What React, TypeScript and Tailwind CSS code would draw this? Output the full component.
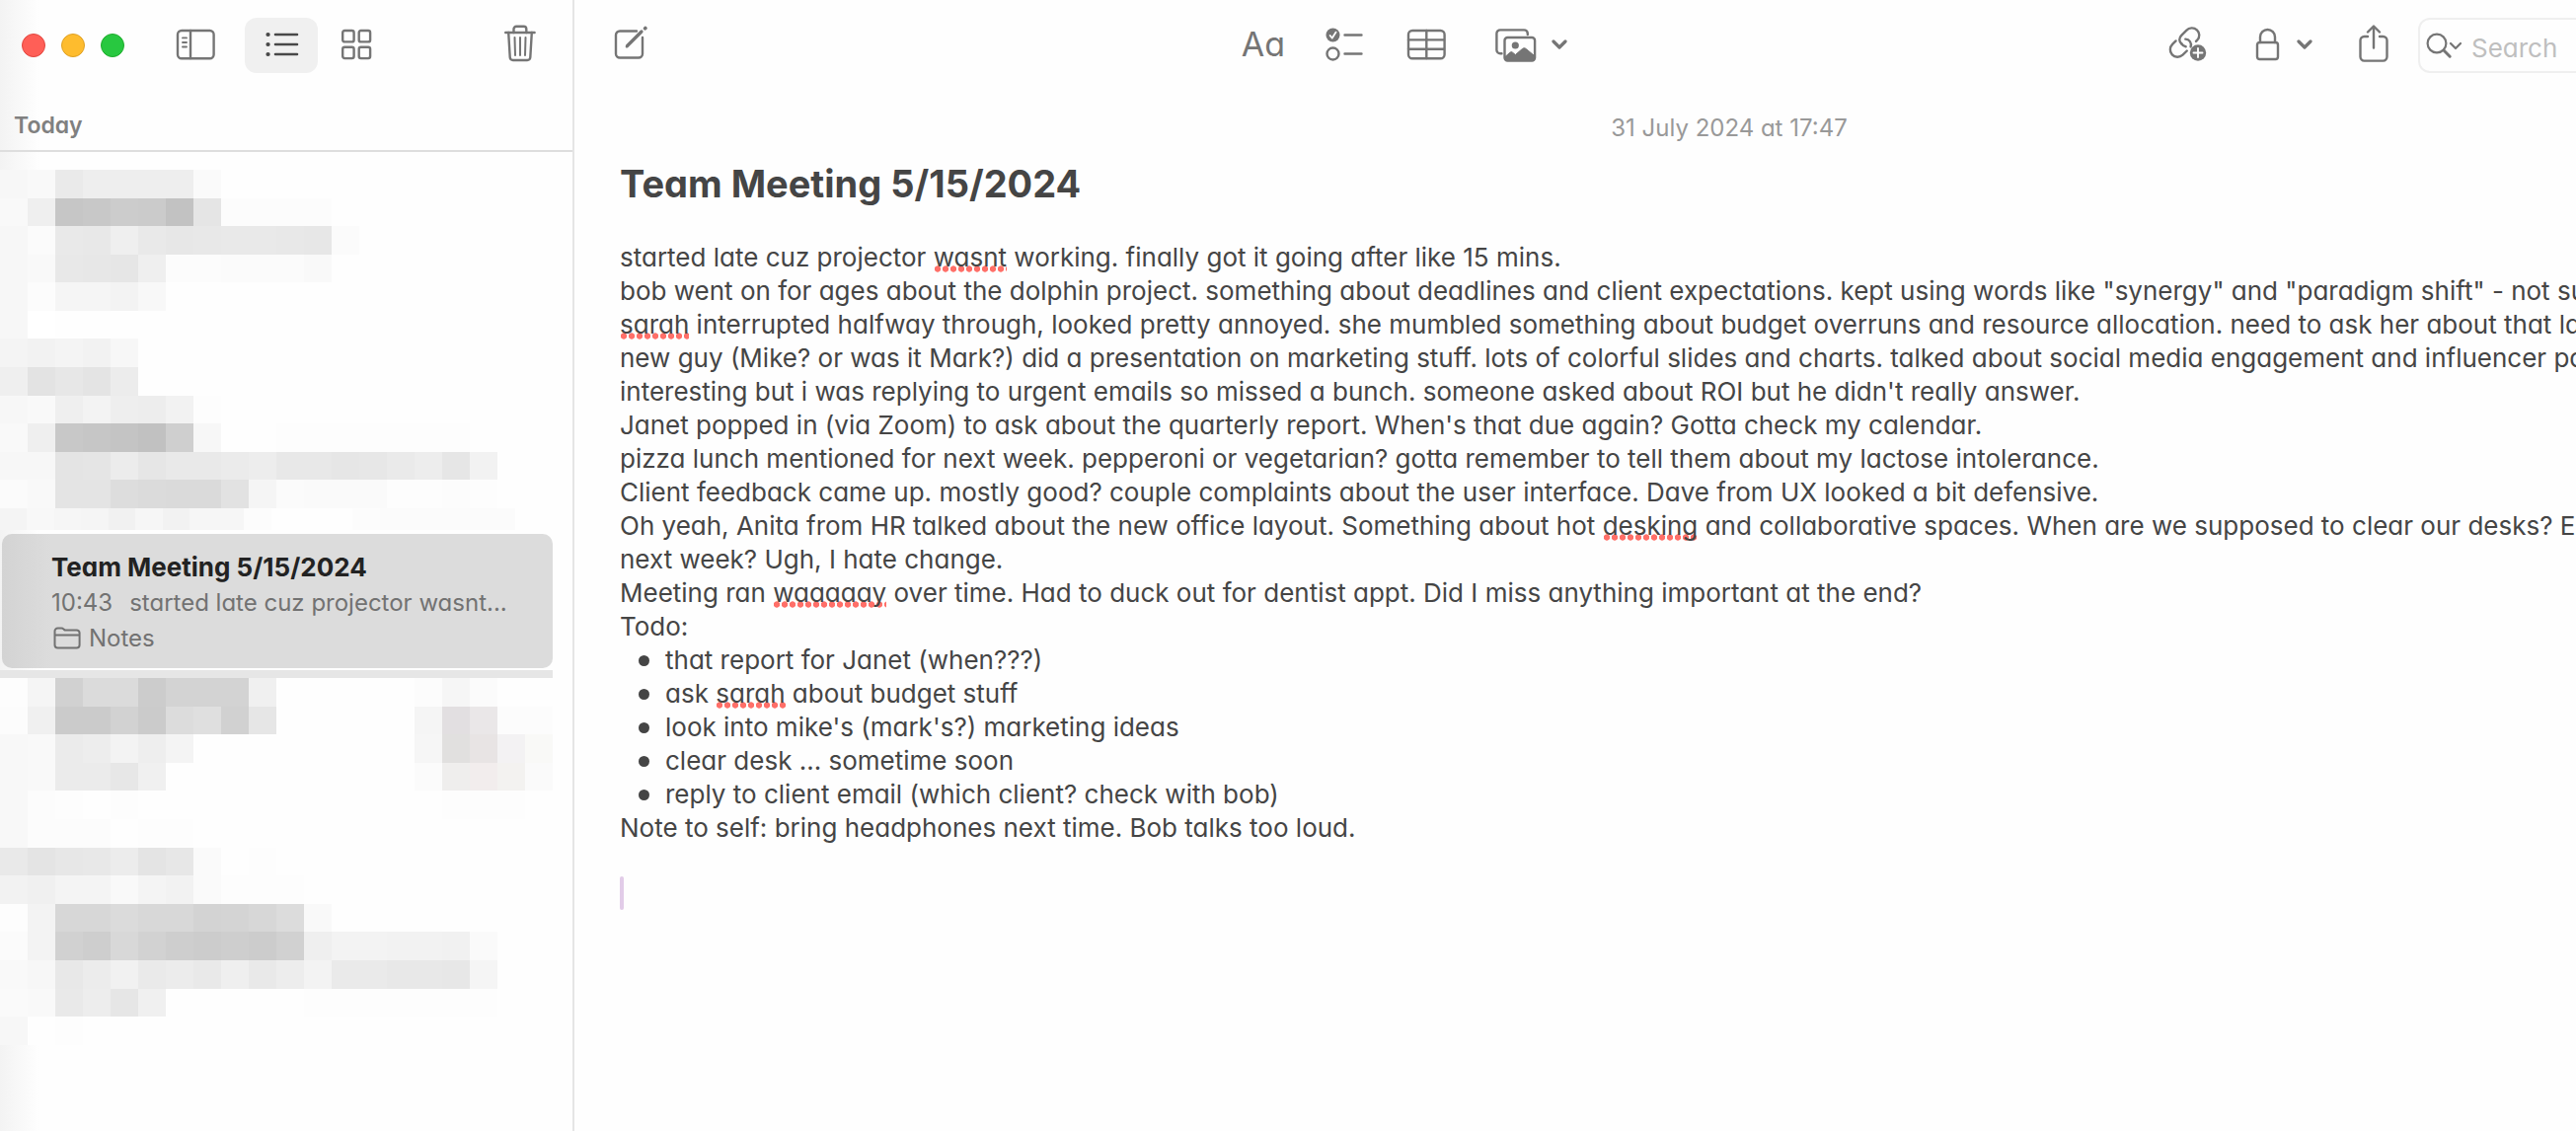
import React from "react";

type IconProps = { className: string; viewBox: string; children: React.ReactNode };

function Icon({ className, viewBox, children }: IconProps) {
  return (
    <svg
      className={className}
      viewBox={viewBox}
      fill="none"
      stroke="currentColor"
      strokeWidth="2.4"
      strokeLinecap="round"
      strokeLinejoin="round"
      aria-hidden="true"
    >
      {children}
    </svg>
  );
}

function Chevron({ className }: { className: string }) {
  return (
    <Icon className={className} viewBox="0 0 16 12">
      <path d="M2 3l6 6 6-6" strokeWidth="3.2" />
    </Icon>
  );
}

const topMosaic = [
  "f7 f9 ea ee ee ee ee fa",
  "f9 ef c6 c8 cc cb c2 e5 fc fc fc fc",
  "f7 fb e9 e8 ef e9 e7 e8 e9 e9 e8 e7 fb",
  "f7 f9 e8 e7 e6 ef fc fc fb fb fb f9",
  "f7 fc f5 f5 f3 f8",
  "f7 ff fe fe fe",
  "f4 f2 f4 f2 f7",
  "ef e3 e7 e4 ec fe",
  "f7 f9 ef f3 ee ed f2 fd",
  "f9 ef c8 c6 c4 c1 cf f7 fe fe fd fd fd fd fd fd fd",
  "f7 f7 e4 e5 ec e6 e9 e9 eb ed e8 e8 e6 e7 ea ed e6 f2",
  "fb f9 e4 e4 dd db da da e2 f5 fb fa fa fa fd fd fc fd",
];

const topMosaicTail = "f4 f8 f6 f5 f1 f6 f2 f6 f6 fc fe fe fe fc fb fb fb fb fb";

const bottomMosaic = [
  "fd f5 d1 db db cc d3 d3 d3 f0 fe fe fe fe fe fc f6 fb fe",
  "fc f0 cb cb d2 cb dc df d1 e6 fe fe fe fe fe f5 e2dfe1 eae7e8 fc fc",
  "f8 f9 eb ed f3 ee f4 fe fe fe fe fe fe fe fe f6 e1e0df e8e4e4 f3f2f3 f9f9f7",
  "f8 f9 eb eb e7 f0 fe fe fe fe fe fe fe fe fe fb efeeed f2eded f3f2f0 fa",
  "f8 fc fd fe fd fe fe fe fe fe fe fe fe fe fe fe fd fd fd",
  "f8 fc fc fc fe fd fd",
  "e9 e4 e7 e8 ec e4 e7 fa fe fd",
  "f2 f0 f4 f4 f9 f4 f2 fa fd fd fd",
  "fd f3 d7 d7 db d8 d8 d3 d4 d7 dc f9",
  "fb f3 d1 ce d8 d2 ce cc ce cc d1 ef f3 f3 f2 f2 f1 fa",
  "f9 f7 e8 ec f1 ea ec e9 ef e9 ed f3 ea ea e8 e8 e7 f5",
  "fa f9 e9 ed e6 f0 fe fe fe fe fe fd fd fd fd fd fd fd",
  "f7 fe fd fe fe fe",
];

function MosaicRow({ row, className }: { row: string; className: string }) {
  return (
    <div className={className}>
      {row.split(" ").map((tone, i) => (
        <span
          key={i}
          className="w-7"
          style={{ backgroundColor: "#" + (tone.length === 2 ? tone + tone + tone : tone) }}
        />
      ))}
    </div>
  );
}

function Misspelled({ children }: { children: string }) {
  return (
    <span className="bg-[radial-gradient(circle_closest-side,#ff6f68_80%,transparent_100%)] bg-[length:8px_7px] bg-[position:0_100%] bg-repeat-x">
      {children}
    </span>
  );
}

const todos: React.ReactNode[] = [
  "that report for Janet (when???)",
  <>
    ask <Misspelled>sarah</Misspelled> about budget stuff
  </>,
  "look into mike's (mark's?) marketing ideas",
  "clear desk ... sometime soon",
  "reply to client email (which client? check with bob)",
];

function Sidebar() {
  return (
    <aside className="w-[582px] shrink-0 border-r-2 border-[#e5e5e5] bg-[linear-gradient(to_right,#f3f3f3,#fefefe_40px)]">
      <div className="flex h-[92px] items-center pl-[22px] pr-[37px] text-[#757575]">
        <div className="flex gap-4">
          <button aria-label="Close" className="size-6 rounded-full border border-[#e2463f] bg-[#ff5f57]" />
          <button aria-label="Minimise" className="size-6 rounded-full border border-[#dfa023] bg-[#febc2e]" />
          <button aria-label="Zoom" className="size-6 rounded-full border border-[#1eac2c] bg-[#28c840]" />
        </div>
        <button aria-label="Toggle folders" className="mb-0.5 ml-[52px]">
          <Icon className="h-8 w-10" viewBox="0 0 40 32">
            <rect x="2" y="2" width="36.6" height="28.2" rx="4" />
            <path d="M15 2v28" />
            <path d="M7 9.4h4M7 14h4M7 18.5h4" strokeWidth="1.9" />
          </Icon>
        </button>
        <button
          aria-label="View as list"
          aria-pressed="true"
          className="ml-[30px] flex h-14 w-[74px] items-center justify-center rounded-xl bg-[#f0f0f0] text-[#484848]"
        >
          <Icon className="mb-0.5 h-7 w-9" viewBox="0 0 36 28">
            <path d="M12 4h22M12 14h22M12 24h22" strokeWidth="2.6" />
            <path d="M4.5 4h.1M4.5 14h.1M4.5 24h.1" strokeWidth="4.2" />
          </Icon>
        </button>
        <button aria-label="View as gallery" className="mb-0.5 ml-6">
          <Icon className="size-8" viewBox="0 0 32 32">
            <rect x="1.2" y="2" width="11.4" height="11.4" rx="2" />
            <rect x="17.7" y="2" width="11.4" height="11.4" rx="2" />
            <rect x="1.2" y="18.7" width="11.4" height="11.4" rx="2" />
            <rect x="17.7" y="18.7" width="11.4" height="11.4" rx="2" />
          </Icon>
        </button>
        <button aria-label="Delete" className="mb-1 ml-auto">
          <Icon className="h-[38px] w-8" viewBox="0 0 32 38">
            <path d="M1.2 8h29.4" />
            <path d="M9.5 8V4.4a2.6 2.6 0 0 1 2.6-2.6h7.600a2.6 2.6 0 0 1 2.6 2.6V8" />
            <path d="M4.2 8l1.5 25a3.2 3.2 0 0 0 3.2 3h14.2a3.2 3.2 0 0 0 3.2-3L27.8 8" />
            <path d="M10.5 13l.5 18M16 13v18M21.500 13l-.5 18" strokeWidth="2" />
          </Icon>
        </button>
      </div>
      <h2 className="h-[62px] border-b-2 border-[#dedede] pl-3.5 pt-5 text-[23px] font-semibold leading-[30px] text-[#808080]">
        Today
      </h2>

      <div aria-hidden="true" className="mt-[18px] flex flex-col">
        <div className="flex h-[343px] flex-col">
          {topMosaic.map((row, i) => (
            <MosaicRow key={i} row={row} className="flex flex-1" />
          ))}
        </div>
        <MosaicRow row={topMosaicTail} className="flex h-[22px] w-[522px] overflow-hidden" />
      </div>

      <a
        href="#team-meeting"
        className="ml-0.5 mr-5 mt-1 block h-[136px] rounded-[10px] bg-[linear-gradient(to_right,#d3d3d3,#dcdcdc_50px)] pl-[50px] pt-4 text-[24px] leading-9 text-[#727272]"
      >
        <h3 className="text-[26px] font-bold text-[#222]">Team Meeting 5/15/2024</h3>
        <p className="flex gap-[17px] whitespace-nowrap">
          <span>10:43</span>
          <span>started late cuz projector wasnt...</span>
        </p>
        <p className="flex items-center gap-2">
          <Icon className="ml-0.5 h-6 w-7" viewBox="0 0 28 24">
            <path
              d="M1.5 18.5v-14a3 3 0 0 1 3-3h3.8c1 0 1.6.4 2.3 1.1l1 .8h12a3 3 0 0 1 3 3v12.100a3 3 0 0 1-3 3h-19.100a3 3 0 0 1-3-3zM2 8.500h24"
              strokeWidth="2"
            />
          </Icon>
          Notes
        </p>
      </a>

      <div aria-hidden="true" className="mr-5 mt-0.5 h-2 bg-[#e6e6e6]" />
      <div aria-hidden="true" className="flex h-[372px] flex-col">
        {bottomMosaic.map((row, i) => (
          <MosaicRow key={i} row={row} className="flex flex-1" />
        ))}
      </div>
    </aside>
  );
}

function Toolbar() {
  return (
    <header className="flex h-[90px] items-center justify-between pl-10 pr-5 text-[#757575]">
      <button aria-label="New note">
        <Icon className="mb-0.5 h-9 w-[35px]" viewBox="0 0 35 36">
          <path d="M23 5.500H6a4 4 0 0 0-4 4v19a4 4 0 0 0 4 4h19a4 4 0 0 0 4-4V12" />
          <path d="M13.500 20.500L28 6" strokeWidth="3.2" />
          <path d="M12.800 21.300l.6-.9" strokeWidth="2.2" />
          <path d="M31.600 2.800l.3-.3" strokeWidth="3.6" />
        </Icon>
      </button>

      <div className="mr-2 flex items-center">
        <button aria-label="Text format" className="text-[34px] leading-10">
          Aa
        </button>
        <button aria-label="Checklist" className="ml-[41px]">
          <Icon className="h-[34px] w-[38px]" viewBox="0 0 38 34">
            <circle cx="7.5" cy="7.5" r="7" fill="currentColor" stroke="none" />
            <path d="M4.6 8l2.2 2.6 3.8-6" stroke="#fefefe" strokeWidth="1.8" />
            <circle cx="7.5" cy="26.5" r="6" />
            <path d="M19.5 7.5h17M19.5 26.5h17" />
          </Icon>
        </button>
        <button aria-label="Table" className="ml-11">
          <Icon className="h-8 w-10" viewBox="0 0 40 32">
            <rect x="2" y="2" width="36.6" height="28.2" rx="4" />
            <path d="M20.3 2v28M2 11.4h36M2 20.8h36" />
          </Icon>
        </button>
        <button aria-label="Media" className="ml-[50px] flex items-center gap-[15px]">
          <Icon className="mt-0.5 h-[34px] w-[42px]" viewBox="0 0 42 34">
            <path d="M6.5 25.3H5a3.6 3.6 0 0 1-3.6-3.6V5A3.6 3.6 0 0 1 5 1.4h24.2A3.6 3.6 0 0 1 32.8 5v1" />
            <rect x="9.5" y="9" width="30.6" height="23.6" rx="3" />
            <circle cx="20.3" cy="17" r="3.6" fill="currentColor" stroke="none" />
            <path
              d="M10 28.5l5-4.3c.9-.8 1.8-.8 2.6 0l2.8 2.3 7-6c1.3-1.1 2.5-1.1 3.8 0l8.800 7.300v2.700a2 2 0 0 1-2 2H12a2 2 0 0 1-2-2z"
              fill="currentColor"
              strokeWidth="1"
            />
          </Icon>
          <Chevron className="h-3 w-4" />
        </button>
      </div>

      <div className="flex items-center">
        <button aria-label="Add link">
          <Icon className="h-9 w-10" viewBox="0 0 40 36">
            <path d="M13.5 17.5c-3-2.6-2.9-6.1-.3-8.7l5-5c3-3 7.7-3.2 10.7-.5s3.2 7.3.3 10.4l-1.2 1.2" />
            <path d="M17.3 12.6c4 .2 6.6 4 5.3 7.8" />
            <path d="M7.6 14.4l-3.3 3.3c-3 3-3.3 7.7-.5 10.7s7.7 3 10.7.3l4.3-4.2" />
            <path d="M13.4 17.4c1 1.7 2.4 2.6 4.3 2.9" />
            <circle cx="30" cy="26.5" r="8.2" fill="currentColor" stroke="none" />
            <path d="M30 22v9M25.5 26.5h9" stroke="#fefefe" strokeWidth="1.9" />
          </Icon>
        </button>
        <button aria-label="Lock note" className="ml-12 flex items-center gap-4">
          <Icon className="h-[34px] w-[26px]" viewBox="0 0 26 34">
            <rect x="2" y="15" width="21" height="17" rx="2.4" />
            <path d="M5 15V9.500a7.500 7.500 0 0 1 15 0V15" />
          </Icon>
          <Chevron className="h-3 w-4" />
        </button>
        <button aria-label="Share" className="mb-0.5 ml-[47px]">
          <Icon className="h-[38px] w-[30px]" viewBox="0 0 30 38">
            <path d="M9 12H5.500a4 4 0 0 0-4 4v16.600a4 4 0 0 0 4 4H24.500a4 4 0 0 0 4-4V16a4 4 0 0 0-4-4H21" />
            <path d="M15 23.500V2M9 7.500l6-6 6 6" />
          </Icon>
        </button>
        <label className="ml-[30px] mt-0.5 flex h-14 w-[452px] items-center rounded-xl border-2 border-[#efefef] pl-1.5">
          <Icon className="h-7 w-9" viewBox="0 0 36 28">
            <circle cx="11" cy="12" r="9.4" strokeWidth="2.2" />
            <path d="M18 19l6.2 6.2" strokeWidth="3" />
            <path d="M25 12l5 5 5-5" strokeWidth="2.2" />
          </Icon>
          <input
            aria-label="Search"
            placeholder="Search"
            className="ml-2.5 h-12 min-w-0 flex-1 bg-transparent pt-1 text-[26px] outline-none placeholder:text-[#bfbfbf]"
          />
        </label>
      </div>
    </header>
  );
}

export default function App() {
  return (
    <div className="flex min-h-screen overflow-hidden bg-[#fefefe] font-[Inter,sans-serif] [font-feature-settings:'cv11']">
      <Sidebar />
      <main className="-mr-[312px] min-w-0 flex-1">
        <Toolbar />
        <time className="mt-[25px] block text-center text-[24px] leading-[30px] text-[#999]">
          31 July 2024 at 17:47
        </time>
        <article id="team-meeting" className="whitespace-nowrap pl-[46px] pt-[17px] text-[26px] leading-[34px] text-[#454545]">
          <h1 className="text-[38px] font-bold leading-[48px]">Team Meeting 5/15/2024</h1>
          <div className="mt-[34px]">
            <p>
              started late cuz projector <Misspelled>wasnt</Misspelled> working. finally got it going after like 15 mins.
            </p>
            <p>
              bob went on for ages about the dolphin project. something about deadlines and client expectations. kept using
              words like "synergy" and "paradigm shift" - not sure
            </p>
            <p>
              <Misspelled>sarah</Misspelled> interrupted halfway through, looked pretty annoyed. she mumbled something about
              budget overruns and resource allocation. need to ask her about that later
            </p>
            <p>
              new guy (Mike? or was it Mark?) did a presentation on marketing stuff. lots of colorful slides and charts.
              talked about social media engagement and influencer part
              <br />
              interesting but i was replying to urgent emails so missed a bunch. someone asked about ROI but he didn't
              really answer.
            </p>
            <p>Janet popped in (via Zoom) to ask about the quarterly report. When's that due again? Gotta check my calendar.</p>
            <p>
              pizza lunch mentioned for next week. pepperoni or vegetarian? gotta remember to tell them about my lactose
              intolerance.
            </p>
            <p>
              Client feedback came up. mostly good? couple complaints about the user interface. Dave from UX looked a bit
              defensive.
            </p>
            <p>
              Oh yeah, Anita from HR talked about the new office layout. Something about hot{" "}
              <Misspelled>desking</Misspelled> and collaborative spaces. When are we supposed to clear our desks? End
              <br />
              next week? Ugh, I hate change.
            </p>
            <p>
              Meeting ran <Misspelled>waaaaay</Misspelled> over time. Had to duck out for dentist appt. Did I miss anything
              important at the end?
            </p>
            <p>Todo:</p>
            <ul className="pl-[19px]">
              {todos.map((todo, i) => (
                <li key={i} className="flex items-center gap-4">
                  <span className="size-[11px] rounded-full bg-[#454545]" />
                  <span>{todo}</span>
                </li>
              ))}
            </ul>
            <p>Note to self: bring headphones next time. Bob talks too loud.</p>
          </div>
          <div className="mt-8 h-[34px] w-1 rounded-full bg-[#e2cce8]" />
        </article>
      </main>
    </div>
  );
}
